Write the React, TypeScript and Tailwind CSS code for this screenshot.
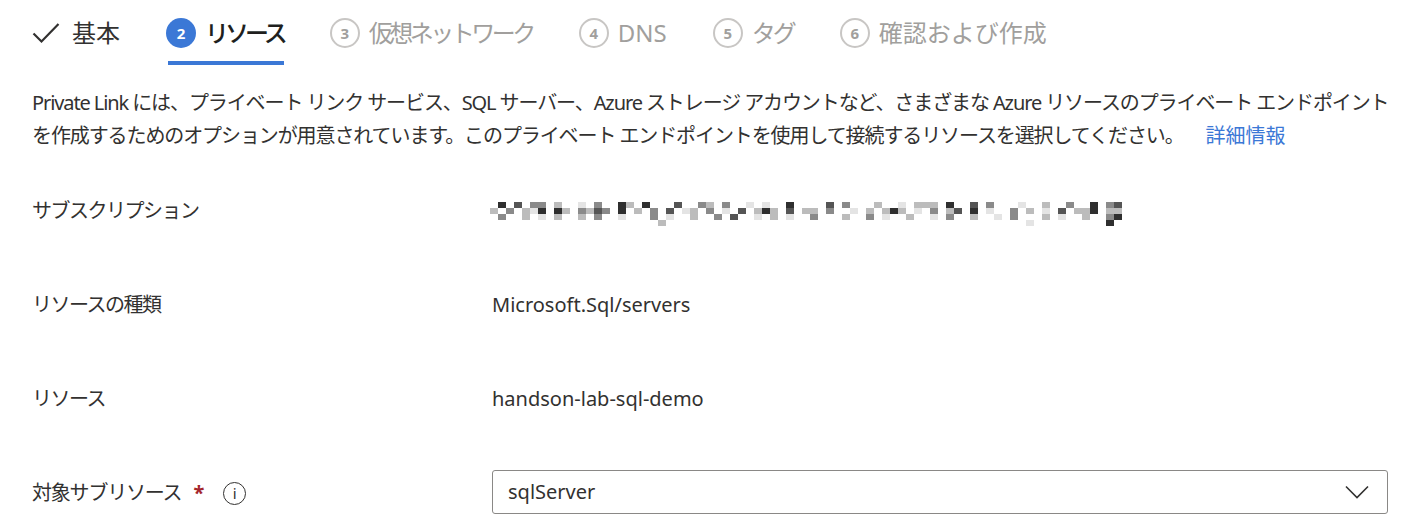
const FONT = { fontFamily: '"Noto Sans", "Noto Sans CJK JP", sans-serif' };

type Step = { n: number; label: string; state: 'done' | 'active' | 'todo'; track: string };

const steps: Step[] = [
  { n: 1, label: '基本', state: 'done', track: 'tracking-[0px]' },
  { n: 2, label: 'リソース', state: 'active', track: 'tracking-[-4px]' },
  { n: 3, label: '仮想ネットワーク', state: 'todo', track: 'tracking-[-3.5px]' },
  { n: 4, label: 'DNS', state: 'todo', track: 'tracking-[0px]' },
  { n: 5, label: 'タグ', state: 'todo', track: 'tracking-[-3px]' },
  { n: 6, label: '確認および作成', state: 'todo', track: 'tracking-[0px]' },
];

// pixelated (redacted) subscription name
const mosaic = [
  '..a.b.cc.d..e.c..ad.a...b..cd.c..e.e..a....b.c...d..e.ddd.a..b.c...e..d..c..a.cb',
  '.d.c.dea.ad.cdbc.a.d.c.b.ed.c.e.b.dad.b.dd.c..e.d.dad.e.c.db.a.e..c.d.e.b.dda.dd',
  '..c..d.e.d..d.c..e...c.e..d..c.b..e.d.e..c...d..c.e..d..e.c..d..e.c...d.e..d..ca',
  '......................d.............................................e.........a',
];
const shade: Record<string, string> = {
  a: 'bg-[#2f2f2f]',
  b: 'bg-[#555555]',
  c: 'bg-[#8a8a8a]',
  d: 'bg-[#bcbcbc]',
  e: 'bg-[#e4e4e4]',
  '.': 'bg-transparent',
};

function StepTab({ step }: { step: Step }) {
  const active = step.state === 'active';
  const todo = step.state === 'todo';
  return (
    <div className="relative flex items-center gap-[9px] h-[66px]">
      {step.state === 'done' ? (
        <svg width="28" height="22" viewBox="0 0 28 22" className="mr-[3px]">
          <path d="M1.5 11.5 L9.5 19.5 L26.5 2" fill="none" stroke="#323130" strokeWidth="2.2" />
        </svg>
      ) : (
        <span
          className={
            active
              ? 'flex h-[30px] w-[30px] items-center justify-center rounded-full bg-[#3b78d6] text-[15px] font-bold text-white'
              : 'flex h-[30px] w-[30px] items-center justify-center rounded-full border-2 border-[#c8c6c4] text-[15px] font-bold text-[#a19f9d]'
          }
        >
          {step.n}
        </span>
      )}
      <span
        className={
          'text-[24px] leading-none ' +
          step.track +
          ' ' +
          (todo ? 'text-[#a19f9d]' : active ? 'text-[#201f1e] font-medium' : 'text-[#323130]')
        }
      >
        {step.label}
      </span>
      {active && <div className="absolute bottom-[1px] left-[2px] right-0 h-[4px] bg-[#3b78d6]" />}
    </div>
  );
}

function Row({ label, children }: { label: React.ReactNode; children: React.ReactNode }) {
  return (
    <div className="flex items-center h-[94px]">
      <div className="w-[460px] shrink-0 flex items-center text-[20px] text-[#323130] tracking-[-1.5px]">{label}</div>
      <div className="flex-1 text-[20px] text-[#323130]">{children}</div>
    </div>
  );
}

export default function App() {
  return (
    <div className="h-[528px] w-[1404px] overflow-hidden bg-white pl-[32px] pr-[16px]" style={FONT}>
      <div className="flex items-center gap-[46px]">
        {steps.map((s) => (
          <StepTab key={s.n} step={s} />
        ))}
      </div>

      <div className="mt-[20px] text-[20px] leading-[33px] text-[#323130] tracking-[-1.1px]">
        <div className="whitespace-nowrap">
          Private Link には、プライベート リンク サービス、SQL サーバー、Azure ストレージ アカウントなど、さまざまな Azure リソースのプライベート エンドポイント
        </div>
        <div className="whitespace-nowrap">
          を作成するためのオプションが用意されています。このプライベート エンドポイントを使用して接続するリソースを選択してください。
          <a className="ml-[22px] tracking-[0px] text-[#3b78d6]">詳細情報</a>
        </div>
      </div>

      <div className="mt-[12px]">
        <Row label="サブスクリプション">
          <div className="-ml-[10px] mt-[6px] flex flex-col">
            {mosaic.map((line, i) => (
              <div key={i} className="flex">
                {line.split('').map((ch, j) => (
                  <div key={j} className={'h-[6px] w-[8px] ' + shade[ch]} />
                ))}
              </div>
            ))}
          </div>
        </Row>
        <Row label="リソースの種類">Microsoft.Sql/servers</Row>
        <Row label="リソース">handson-lab-sql-demo</Row>
        <div className="flex items-center h-[94px]">
          <div className="w-[460px] shrink-0 flex items-center text-[20px] text-[#323130]">
            <span className="tracking-[-1.2px]">対象サブリソース</span>
            <span className="ml-[12px] text-[#a4262c] font-bold">*</span>
            <span className="ml-[19px] flex h-[23px] w-[23px] items-center justify-center rounded-full border-[1.5px] border-[#323130] text-[15px] leading-none">
              i
            </span>
          </div>
          <div className="-mt-[3px] flex h-[44px] flex-1 items-center justify-between rounded-[3px] border border-[#8a8886] pl-[15px] pr-[18px] text-[20px] text-[#323130]">
            <span>sqlServer</span>
            <svg width="24" height="14" viewBox="0 0 24 14">
              <path d="M1 1.5 L12 12.5 L23 1.5" fill="none" stroke="#323130" strokeWidth="1.6" />
            </svg>
          </div>
        </div>
      </div>
    </div>
  );
}
